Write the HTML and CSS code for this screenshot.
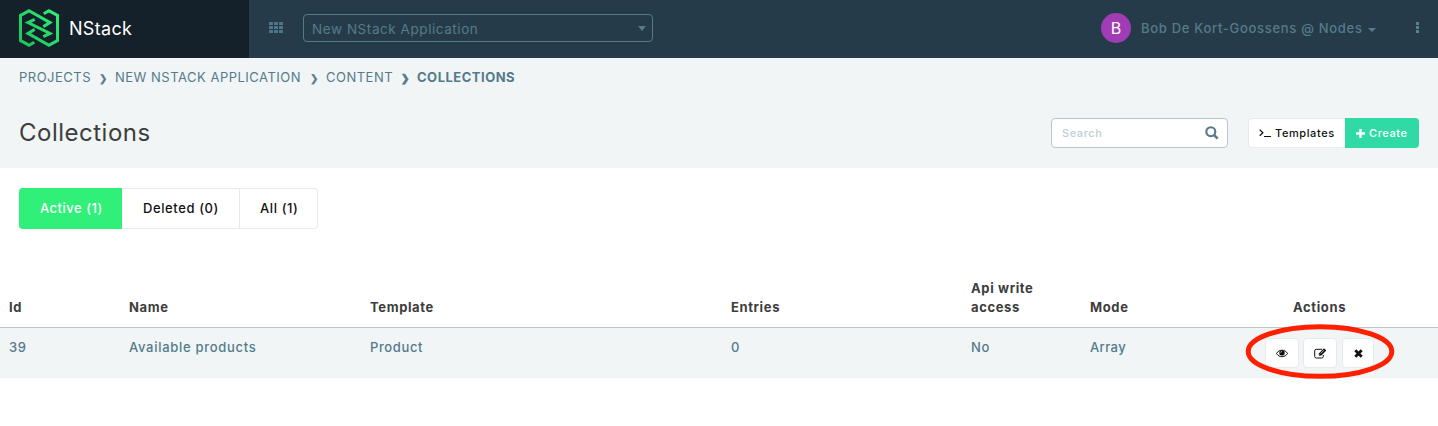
FILE: index.html
```html
<!DOCTYPE html>
<html lang="en">
<head>
<meta charset="utf-8">
<title>NStack – Collections</title>
<link rel="stylesheet" href="styles.css">
</head>
<body>
<header class="topbar">
  <a class="brand">
    <svg class="logo" width="40" height="38" viewBox="0 0 40 38" fill="none" stroke-width="3">
      <defs><linearGradient id="g" x1="0" y1="38" x2="40" y2="0" gradientUnits="userSpaceOnUse"><stop offset="0" stop-color="#1cc254"/><stop offset="1" stop-color="#2ff07a"/></linearGradient></defs>
      <g stroke="url(#g)">
        <path d="M15.300 33.200L10 36.200L1.500 31.700V6.300L10 1.800L31 13.600L24.300 17.600"/>
        <path d="M15.700 10.400L9 13.600L31 24.400L24.300 27.600"/>
        <path d="M15.700 20.400L9 24.400L30 36.200L38.500 31.700V6.300L30 1.800L24.700 4.800"/>
      </g>
    </svg>
    <span class="brand-name">NStack</span>
  </a>
  <svg class="grid-icon" width="14" height="11" viewBox="0 0 14 11"><g fill="#4f7686"><rect width="4" height="3" rx=".6"/><rect x="5" width="4" height="3" rx=".6"/><rect x="10" width="4" height="3" rx=".6"/><rect y="4" width="4" height="3" rx=".6"/><rect x="5" y="4" width="4" height="3" rx=".6"/><rect x="10" y="4" width="4" height="3" rx=".6"/><rect y="8" width="4" height="3" rx=".6"/><rect x="5" y="8" width="4" height="3" rx=".6"/><rect x="10" y="8" width="4" height="3" rx=".6"/></g></svg>
  <div class="app-select"><span class="app-name">New NStack Application</span><i class="caret"></i></div>
  <div class="account">
    <span class="avatar">B</span>
    <span class="user">Bob De Kort-Goossens @ Nodes</span><i class="caret"></i>
  </div>
  <svg class="dots" width="3" height="11" viewBox="0 0 3 11" fill="#5a8494"><rect width="3" height="3" rx=".5"/><rect y="4" width="3" height="3" rx=".5"/><rect y="8" width="3" height="3" rx=".5"/></svg>
</header>

<section class="page-head">
  <nav class="crumbs">
    <a class="c1">PROJECTS</a><i class="sep">❯</i><a class="c2">NEW NSTACK APPLICATION</a><i class="sep">❯</i><a class="c3">CONTENT</a><i class="sep last">❯</i><b class="c4">COLLECTIONS</b>
  </nav>
  <div class="title-row">
    <h1>Collections</h1>
    <div class="search"><span>Search</span>
      <svg width="14" height="14" viewBox="0 0 14 14" fill="none" stroke="#547b8c"><circle cx="5.800" cy="5.700" r="4.500" stroke-width="2.100"/><path d="M9 9L12.700 12.600" stroke-width="2.500"/></svg>
    </div>
    <div class="buttons">
      <a class="btn templates"><svg width="12" height="8" viewBox="0 0 12 8" fill="none" stroke="#111"><path d="M.7.800L3.900 3.800L.7 6.800" stroke-width="1.200"/><path d="M5 7.500H12"/></svg><span>Templates</span></a>
      <a class="btn create"><svg width="9" height="9" viewBox="0 0 9 9"><path d="M3.300 0h2.400v3.300H9v2.400H5.700V9H3.300V5.700H0V3.300h3.300z" fill="#fff"/></svg><span>Create</span></a>
    </div>
  </div>
</section>

<div class="tabs"><a class="tab active">Active (1)</a><a class="tab deleted">Deleted (0)</a><a class="tab all">All (1)</a></div>

<div class="table">
  <div class="row head"><span>Id</span><span>Name</span><span>Template</span><span>Entries</span><span>Api write access</span><span>Mode</span><span class="actions-title">Actions</span></div>
  <div class="row body"><span>39</span><span class="name">Available products</span><span>Product</span><span>0</span><span>No</span><span class="mode">Array</span>
    <div class="actions">
      <a class="act"><svg width="12" height="9" viewBox="0 0 12 9"><path d="M.5 4.500C3 .1 9 .1 11.500 4.500C9 8.800 3 8.800.500 4.500Z" fill="none" stroke="#111"/><circle cx="6" cy="3.900" r="2.700" fill="#111"/><path d="M4.700 3.700Q4.800 2.500 6 2.400" fill="none" stroke="#fff" stroke-width=".6"/></svg></a>
      <a class="act"><svg width="13" height="11" viewBox="0 0 13 11"><path d="M8 1.300H2.300Q.700 1.300.700 2.900V8.400Q.700 10 2.300 10H7.700Q9.300 10 9.300 8.400V7" fill="none" stroke="#111" stroke-width="1"/><path d="M4.800 5.500L10 .3L12.300 2.600L7.100 7.800H4.800Z" fill="#111"/><path d="M5.400 6.500L6.200 7.300M6.700 5.500L10 2.200" stroke="#fff" stroke-width=".7"/></svg></a>
      <a class="act close"><svg width="9" height="9" viewBox="0 0 9 9"><path d="M1.300 1.300L7.700 7.700M7.700 1.300L1.300 7.700" stroke="#111" stroke-width="2.800"/></svg></a>
      <svg class="highlight" width="150" height="56" viewBox="0 0 150 56"><ellipse cx="75" cy="27.500" rx="71.800" ry="24.800" fill="none" stroke="#fd2000" stroke-width="5"/></svg>
    </div>
  </div>
</div>
</body>
</html>
```
FILE: styles.css
```css
* { box-sizing: border-box; }
body { margin: 0; background: #fff; font: 500 13px/19px Inter, "Liberation Sans", sans-serif; color: #3d3d3d; width: 1438px; height: 426px; overflow: hidden; }
span, a, b, h1 { white-space: nowrap; }
svg { display: block; flex: none; }
.topbar { display: flex; align-items: center; height: 58px; background: #263b49; color: #547b8a; }
.brand { display: flex; align-items: center; width: 249px; height: 58px; padding: 0 0 2px 19px; background: #14202a; gap: 10px; }
.brand-name { color: #fff; font-size: 18px; font-weight: 400; letter-spacing: .3px; }
.grid-icon { margin: 0 20px 3px; }
.app-select { display: flex; align-items: center; justify-content: space-between; width: 350px; height: 28px; margin-bottom: 2px; padding: 2px 6px 0 8px; border: 1px solid #547b8a; border-radius: 4px; }
.caret { width: 0; height: 0; border: 4px solid transparent; border-top: 5px solid #547b8a; border-bottom: 0; }
.app-select .caret { margin-bottom: 2px; }
.app-name { letter-spacing: .56px; font-weight: 400; font-size: 13.500px; }
.account { display: flex; align-items: center; margin-left: auto; padding-bottom: 2px; }
.avatar { width: 30px; height: 30px; border-radius: 50%; background: #a03cb4; color: #fff; font-size: 16px; font-weight: 400; line-height: 31px; text-align: center; margin-right: 10px; }
.user { letter-spacing: .7px; width: 227px; padding-top: 1px; }
.account .caret { margin-top: 4px; border-top-width: 4px; }
.dots { margin: 0 19px 3px 40px; }

.page-head { height: 110px; background: #f1f5f6; padding: 10px 19px 0; }
.crumbs { display: flex; align-items: center; color: #547b8c; height: 19px; letter-spacing: .5px; }
.crumbs a { font-weight: 400; }
.sep { width: 25px; padding: 1px 0 0 2px; text-align: center; font: 10px/19px "DejaVu Sans", sans-serif; -webkit-text-stroke: .3px; }
.sep.last { -webkit-text-stroke: .8px; }
.c1 { width: 71px; } .c2 { width: 186px; } .c3 { width: 66px; }
.title-row { display: flex; align-items: center; margin-top: 31px; height: 30px; }
h1 { margin: 0; font-size: 24px; font-weight: 400; line-height: 30px; letter-spacing: .5px; }
.search { display: flex; align-items: center; justify-content: space-between; width: 177px; height: 30px; margin-left: auto; padding: 0 8px 0 10px; background: #fff; border: 1px solid #b4c9d0; border-radius: 4px; color: #bdced4; font-size: 11px; }
.search span { letter-spacing: .6px; }
.buttons { display: flex; margin-left: 20px; font-size: 11px; letter-spacing: .6px; }
.btn { display: flex; align-items: center; height: 30px; gap: 4px; }
.templates { width: 97px; padding-left: 10px; background: #fff; border: 1px solid #e5eaed; border-right: 0; border-radius: 4px 0 0 4px; color: #111; }
.create { width: 74px; padding-left: 11px; background: #2fdaa5; border-radius: 0 4px 4px 0; color: #fff; }

.tabs { display: flex; margin: 20px 0 0 19px; width: 299px; height: 41px; line-height: 39px; color: #111; letter-spacing: .6px; }
.tab { border: 1px solid #e5eaed; border-left: 0; padding-left: 20px; }
.tab.active { width: 103px; background: #30f07a; border-color: #30f07a; color: #fff; border-radius: 4px 0 0 4px; padding-left: 21px; letter-spacing: .5px; }
.deleted { width: 118px; padding-left: 21px; }
.all { width: 78px; border-radius: 0 4px 4px 0; }

.table { margin-top: 41px; }
.row { display: grid; grid-template-columns: 120px 241px 361px 240px 119px 120px 1fr; padding-left: 9px; letter-spacing: .62px; }
.head { height: 58px; align-items: end; padding-bottom: 10px; border-bottom: 1px solid #b7c8cf; font-weight: 700; }
.head span { white-space: normal; }
.head span:nth-child(5) { width: 80px; }
.actions-title { padding-left: 83px; }
.body { height: 50px; background: #f1f5f6; color: #547b8c; padding-top: 10px; }
.name { letter-spacing: .7px; }
.mode { letter-spacing: .4px; }
.actions { position: relative; display: flex; gap: 4px; padding-left: 55px; height: 30px; }
.act { display: flex; align-items: center; justify-content: center; width: 34px; height: 30px; background: #fff; border: 1px solid #e5eaed; border-radius: 4px; }
.act.close { width: 32px; margin-left: 1px; }
.highlight { position: absolute; left: 35px; top: -14px; }
```
